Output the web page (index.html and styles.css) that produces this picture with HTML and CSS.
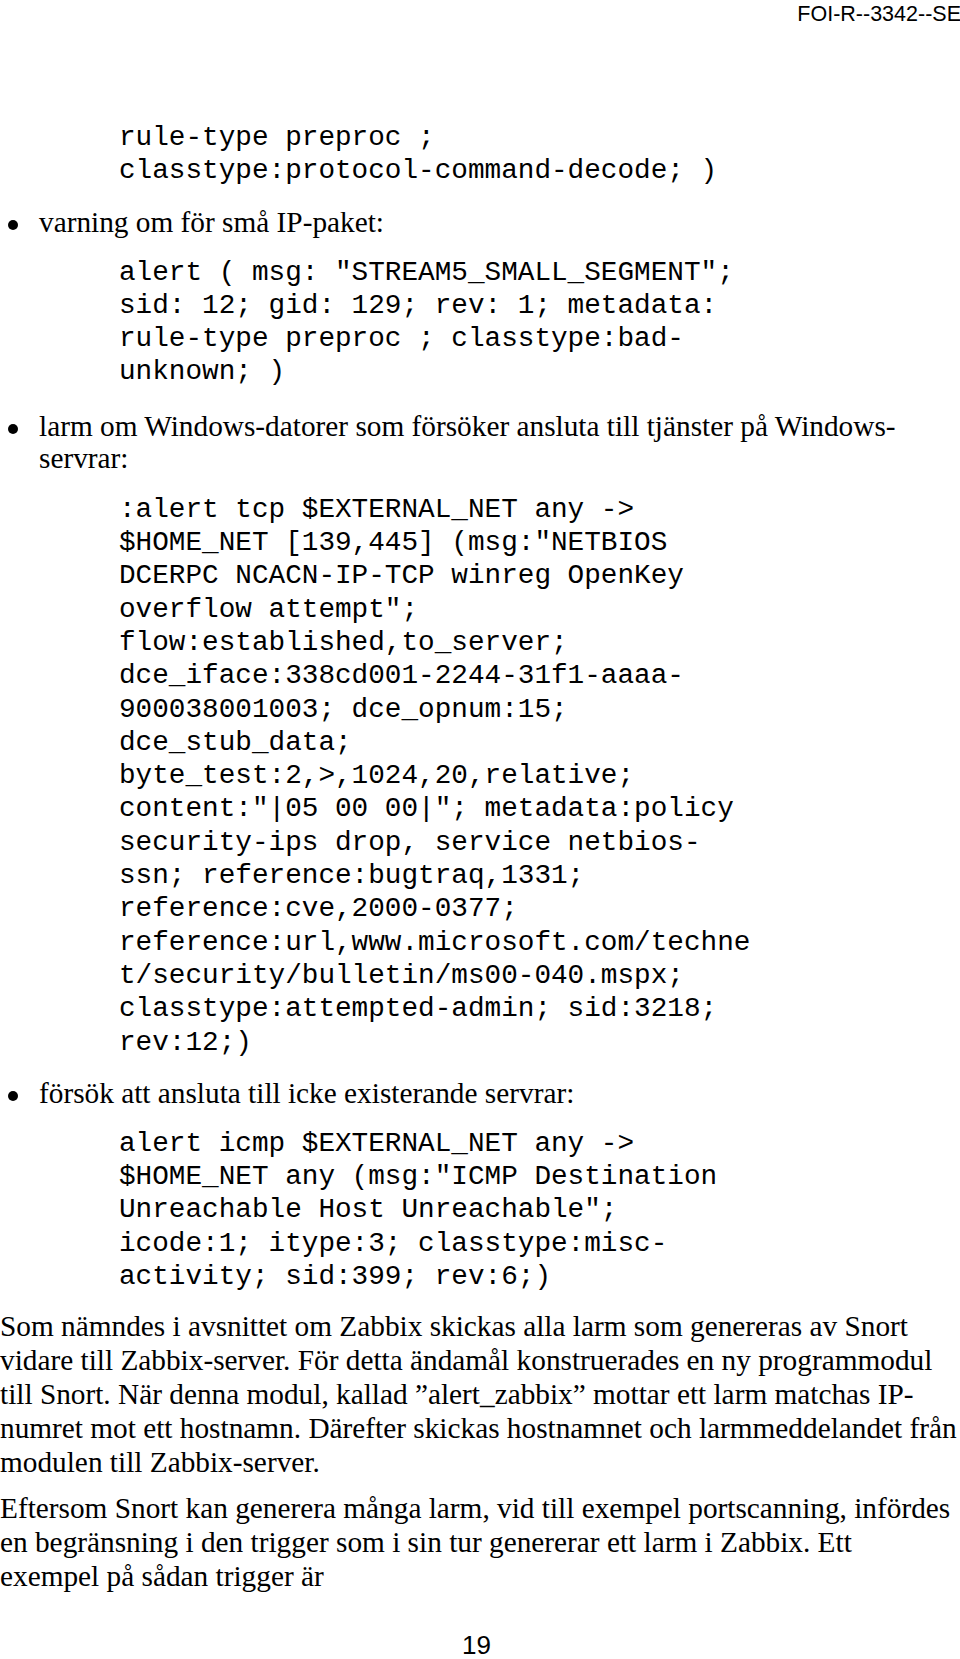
FILE: index.html
```html
<!DOCTYPE html>
<html lang="sv">
<head>
    <meta charset="UTF-8">
    <title>FOI-R--3342--SE, sida 19</title>
    <link rel="stylesheet" href="styles.css">
</head>
<body>
    <div class="page">
        <header class="running-head">FOI-R--3342--SE</header>

        <pre class="rule rule-1">rule-type preproc ;
classtype:protocol-command-decode; )</pre>

        <ul class="bullets bullets-1">
            <li>varning om för små IP-paket:</li>
        </ul>

        <pre class="rule rule-2">alert ( msg: "STREAM5_SMALL_SEGMENT";
sid: 12; gid: 129; rev: 1; metadata:
rule-type preproc ; classtype:bad-
unknown; )</pre>

        <ul class="bullets bullets-2">
            <li>larm om Windows-datorer som försöker ansluta till tjänster på Windows-<br>servrar:</li>
        </ul>

        <pre class="rule rule-3">:alert tcp $EXTERNAL_NET any -&gt;
$HOME_NET [139,445] (msg:"NETBIOS
DCERPC NCACN-IP-TCP winreg OpenKey
overflow attempt";
flow:established,to_server;
dce_iface:338cd001-2244-31f1-aaaa-
900038001003; dce_opnum:15;
dce_stub_data;
byte_test:2,&gt;,1024,20,relative;
content:"|05 00 00|"; metadata:policy
security-ips drop, service netbios-
ssn; reference:bugtraq,1331;
reference:cve,2000-0377;
reference:url,www.microsoft.com/techne
t/security/bulletin/ms00-040.mspx;
classtype:attempted-admin; sid:3218;
rev:12;)</pre>

        <ul class="bullets bullets-3">
            <li>försök att ansluta till icke existerande servrar:</li>
        </ul>

        <pre class="rule rule-4">alert icmp $EXTERNAL_NET any -&gt;
$HOME_NET any (msg:"ICMP Destination
Unreachable Host Unreachable";
icode:1; itype:3; classtype:misc-
activity; sid:399; rev:6;)</pre>

        <p class="text text-1">Som nämndes i avsnittet om Zabbix skickas alla larm som genereras av Snort<br>
        vidare till Zabbix-server. För detta ändamål konstruerades en ny programmodul<br>
        till Snort. När denna modul, kallad ”alert_zabbix” mottar ett larm matchas IP-<br>
        numret mot ett hostnamn. Därefter skickas hostnamnet och larmmeddelandet från<br>
        modulen till Zabbix-server.</p>

        <p class="text text-2">Eftersom Snort kan generera många larm, vid till exempel portscanning, infördes<br>
        en begränsning i den trigger som i sin tur genererar ett larm i Zabbix. Ett<br>
        exempel på sådan trigger är</p>

        <footer class="page-number">19</footer>
    </div>
</body>
</html>
```

FILE: styles.css
```css
body {
    margin: 0;
    background: #fff;
    color: #000;
}
.page {
    width: 960px;
    height: 1659px;
    overflow: hidden;
    display: flex;
    flex-direction: column;
    font-family: 'Liberation Serif', 'Times New Roman', serif;
}
.running-head {
    font-family: 'Liberation Sans', Arial, sans-serif;
    font-size: 21.5px;
    line-height: 22px;
    text-align: right;
    padding-top: 3px;
    margin-right: -1px;
}

/* snort rules */
.rule {
    font-family: 'Liberation Mono', 'Courier New', monospace;
    font-size: 27.7px;
    line-height: 33.3px;
    margin: 0 0 0 119px;
    white-space: pre;
}
.rule-1 { margin-top: 96px; }
.rule-2 { margin-top: 18px; }
.rule-3 { margin-top: 19px; }
.rule-4 { margin-top: 18px; }

/* bullet list */
.bullets {
    list-style: none;
    margin: 0;
    padding: 0;
    font-size: 29.3px;
    line-height: 32px;
}
.bullets li {
    display: flex;
}
.bullets li::before {
    content: "";
    flex: none;
    width: 10px;
    height: 10px;
    border-radius: 50%;
    background: #000;
    margin: 14px 21px 0 8px;
}
.bullets-1 { margin-top: 18px; }
.bullets-2 { margin-top: 21px; }
.bullets-3 { margin-top: 18px; }

/* body text */
.text {
    font-size: 29.3px;
    line-height: 34px;
    margin: 0;
    white-space: nowrap;
}
.text-1 { margin-top: 16px; }
.text-2 { margin-top: 12px; }

.page-number {
    margin-top: auto;
    font-family: 'Liberation Sans', Arial, sans-serif;
    font-size: 26px;
    line-height: 27px;
    text-align: center;
    padding-right: 7px;
}
```
